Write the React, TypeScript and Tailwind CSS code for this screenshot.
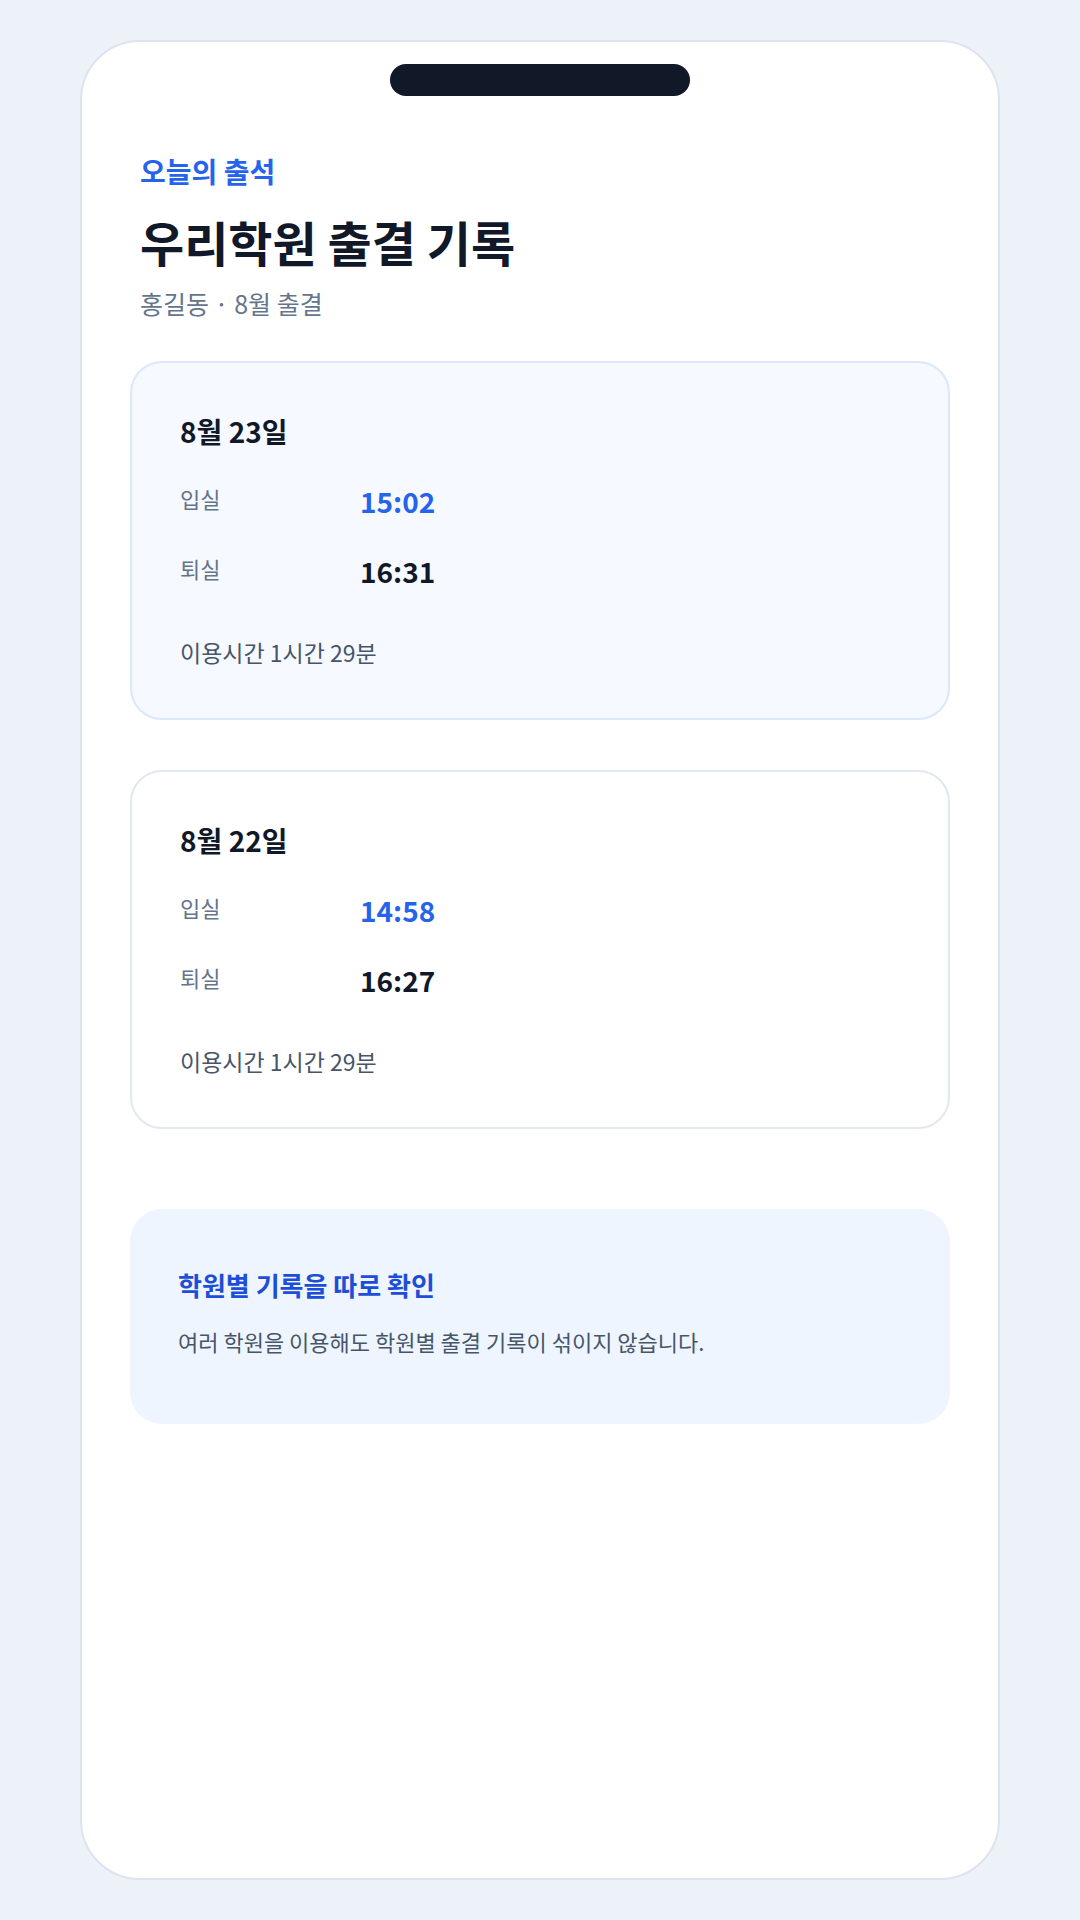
const font = { fontFamily: '"Noto Sans CJK KR", "Noto Sans", sans-serif' };

type Record = {
  date: string;
  checkIn: string;
  checkOut: string;
  usage: string;
  today?: boolean;
};

const records: Record[] = [
  { date: "8월 23일", checkIn: "15:02", checkOut: "16:31", usage: "이용시간 1시간 29분", today: true },
  { date: "8월 22일", checkIn: "14:58", checkOut: "16:27", usage: "이용시간 1시간 29분" },
];

const RecordCard = ({ r }: { r: Record }) => {
  return (
    <div
      className={
        r.today
          ? "rounded-[32px] border-2 border-[#dbe7fb] bg-[#f6f9ff] p-12"
          : "rounded-[32px] border-2 border-[#e2e8f0] bg-white p-12"
      }
    >
      <div className="flex flex-col gap-[30px]">
        <p className="text-[28px] leading-[40px] font-bold text-[#111827]">{r.date}</p>
        <div className="flex items-start">
          <p className="w-[180px] text-[22px] leading-[35px] text-[#64748b]">입실</p>
          <p className="text-[28px] leading-[40px] font-bold text-[#2563eb]">{r.checkIn}</p>
        </div>
        <div className="flex items-start">
          <p className="w-[180px] text-[22px] leading-[35px] text-[#64748b]">퇴실</p>
          <p className="text-[28px] leading-[40px] font-bold text-[#111827]">{r.checkOut}</p>
        </div>
        <p className="mt-[13px] text-[23px] leading-[36px] text-[#475569]">{r.usage}</p>
      </div>
    </div>
  );
};

export default function App() {
  return (
    <div className="min-h-screen bg-[#edf2f9] flex justify-center py-10" style={font}>
      <div className="w-[920px] h-[1840px] rounded-[60px] border-2 border-[#dde4ee] bg-white">
        <div className="mx-auto mt-[22px] w-[300px] h-8 rounded-full bg-[#111827]" />
        <div className="px-12">
          {/* --- header --- */}
          <div className="px-[10px] pt-[56px]">
            <p className="text-[28px] leading-[38px] font-bold text-[#2563eb]">오늘의 출석</p>
            <h1 className="mt-[21px] text-[48px] leading-[60px] font-bold text-[#111827]">
              우리학원 출결 기록
            </h1>
            <p className="mt-[14px] text-[25px] leading-[36px] text-[#64748b]">홍길동 · 8월 출결</p>
          </div>

          {/* --- records --- */}
          <div className="mt-[40px] flex flex-col gap-[50px]">
            {records.map((r, i) => (
              <RecordCard key={i} r={r} />
            ))}
          </div>

          {/* --- info box --- */}
          <div className="mt-20 rounded-[32px] bg-[#eef5ff] px-12 pt-[58px] pb-[67px]">
            <p className="text-[26px] leading-[36px] font-bold text-[#1d4ed8]">학원별 기록을 따로 확인</p>
            <p className="mt-[22px] text-[22px] leading-[32px] text-[#475569]">
              여러 학원을 이용해도 학원별 출결 기록이 섞이지 않습니다.
            </p>
          </div>
        </div>
      </div>
    </div>
  );
}
